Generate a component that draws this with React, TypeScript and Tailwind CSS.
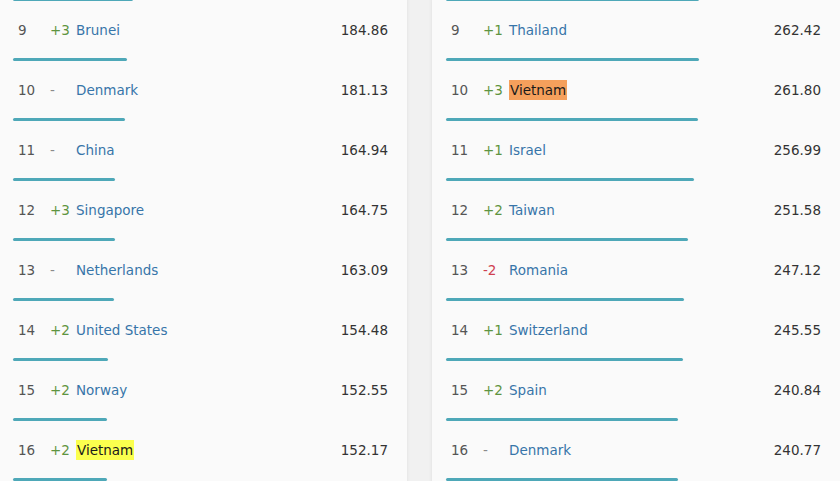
import React from "react";

type Row = { rank: number; change: string; country: string; score: string; hl?: "yellow" | "orange" };

const left: Row[] = [
  { rank: 9, change: "+3", country: "Brunei", score: "184.86" },
  { rank: 10, change: "-", country: "Denmark", score: "181.13" },
  { rank: 11, change: "-", country: "China", score: "164.94" },
  { rank: 12, change: "+3", country: "Singapore", score: "164.75" },
  { rank: 13, change: "-", country: "Netherlands", score: "163.09" },
  { rank: 14, change: "+2", country: "United States", score: "154.48" },
  { rank: 15, change: "+2", country: "Norway", score: "152.55" },
  { rank: 16, change: "+2", country: "Vietnam", score: "152.17", hl: "yellow" },
];

const right: Row[] = [
  { rank: 9, change: "+1", country: "Thailand", score: "262.42" },
  { rank: 10, change: "+3", country: "Vietnam", score: "261.80", hl: "orange" },
  { rank: 11, change: "+1", country: "Israel", score: "256.99" },
  { rank: 12, change: "+2", country: "Taiwan", score: "251.58" },
  { rank: 13, change: "-2", country: "Romania", score: "247.12" },
  { rank: 14, change: "+1", country: "Switzerland", score: "245.55" },
  { rank: 15, change: "+2", country: "Spain", score: "240.84" },
  { rank: 16, change: "-", country: "Denmark", score: "240.77" },
];

function Bar({ w }: { w: number }) {
  return (
    <div className="h-[3px] pl-[14px]">
      <div className="h-[3px] rounded-full bg-[#4ea8b8]" style={{ width: `${w}px` }} />
    </div>
  );
}

function changeColor(c: string) {
  if (c.startsWith("+")) return "text-[#5e9440]";
  if (c === "-") return "text-[#8a8a8a]";
  return "text-[#cf3f4f]";
}

function Card({ rows, ratio, topScore }: { rows: Row[]; ratio: number; topScore: number }) {
  return (
    <div className="w-[408px] shrink-0 bg-[#fafafa] shadow-[0_0_4px_rgba(0,0,0,0.08)] h-[490px]">
      <Bar w={Math.round(topScore * ratio)} />
      {rows.map((r) => (
        <div key={r.rank}>
          <div className="h-[57px] flex items-center pt-[2px] pl-[19px] pr-[19px] text-[13.5px] leading-none">
            <div className="w-[32px] text-[#555]">{r.rank}</div>
            <div className={`w-[26px] ${changeColor(r.change)}`}>{r.change}</div>
            <div className="flex-1">
              {r.hl === "yellow" ? (
                <span className="bg-[#fbff4e] text-[#1a1a1a] font-medium px-[1px] py-[2px]">{r.country}</span>
              ) : r.hl === "orange" ? (
                <span className="bg-[#f5a05c] text-[#1a1a1a] font-medium px-[1px] py-[2px]">{r.country}</span>
              ) : (
                <span className="text-[#3775a9]">{r.country}</span>
              )}
            </div>
            <div className="text-[#333]">{r.score}</div>
          </div>
          <Bar w={Math.round(parseFloat(r.score) * ratio)} />
        </div>
      ))}
    </div>
  );
}

export default function App() {
  return (
    <div
      className="w-[840px] h-[481px] overflow-hidden bg-[#f1f1f1]"
      style={{ fontFamily: '"DejaVu Sans", "Noto Sans", sans-serif' }}
    >
      <div className="flex gap-[25px] -ml-px -mt-[2px]">
        <Card rows={left} ratio={0.6167} topScore={194.6} />
        <Card rows={right} ratio={0.9637} topScore={263.0} />
      </div>
    </div>
  );
}
